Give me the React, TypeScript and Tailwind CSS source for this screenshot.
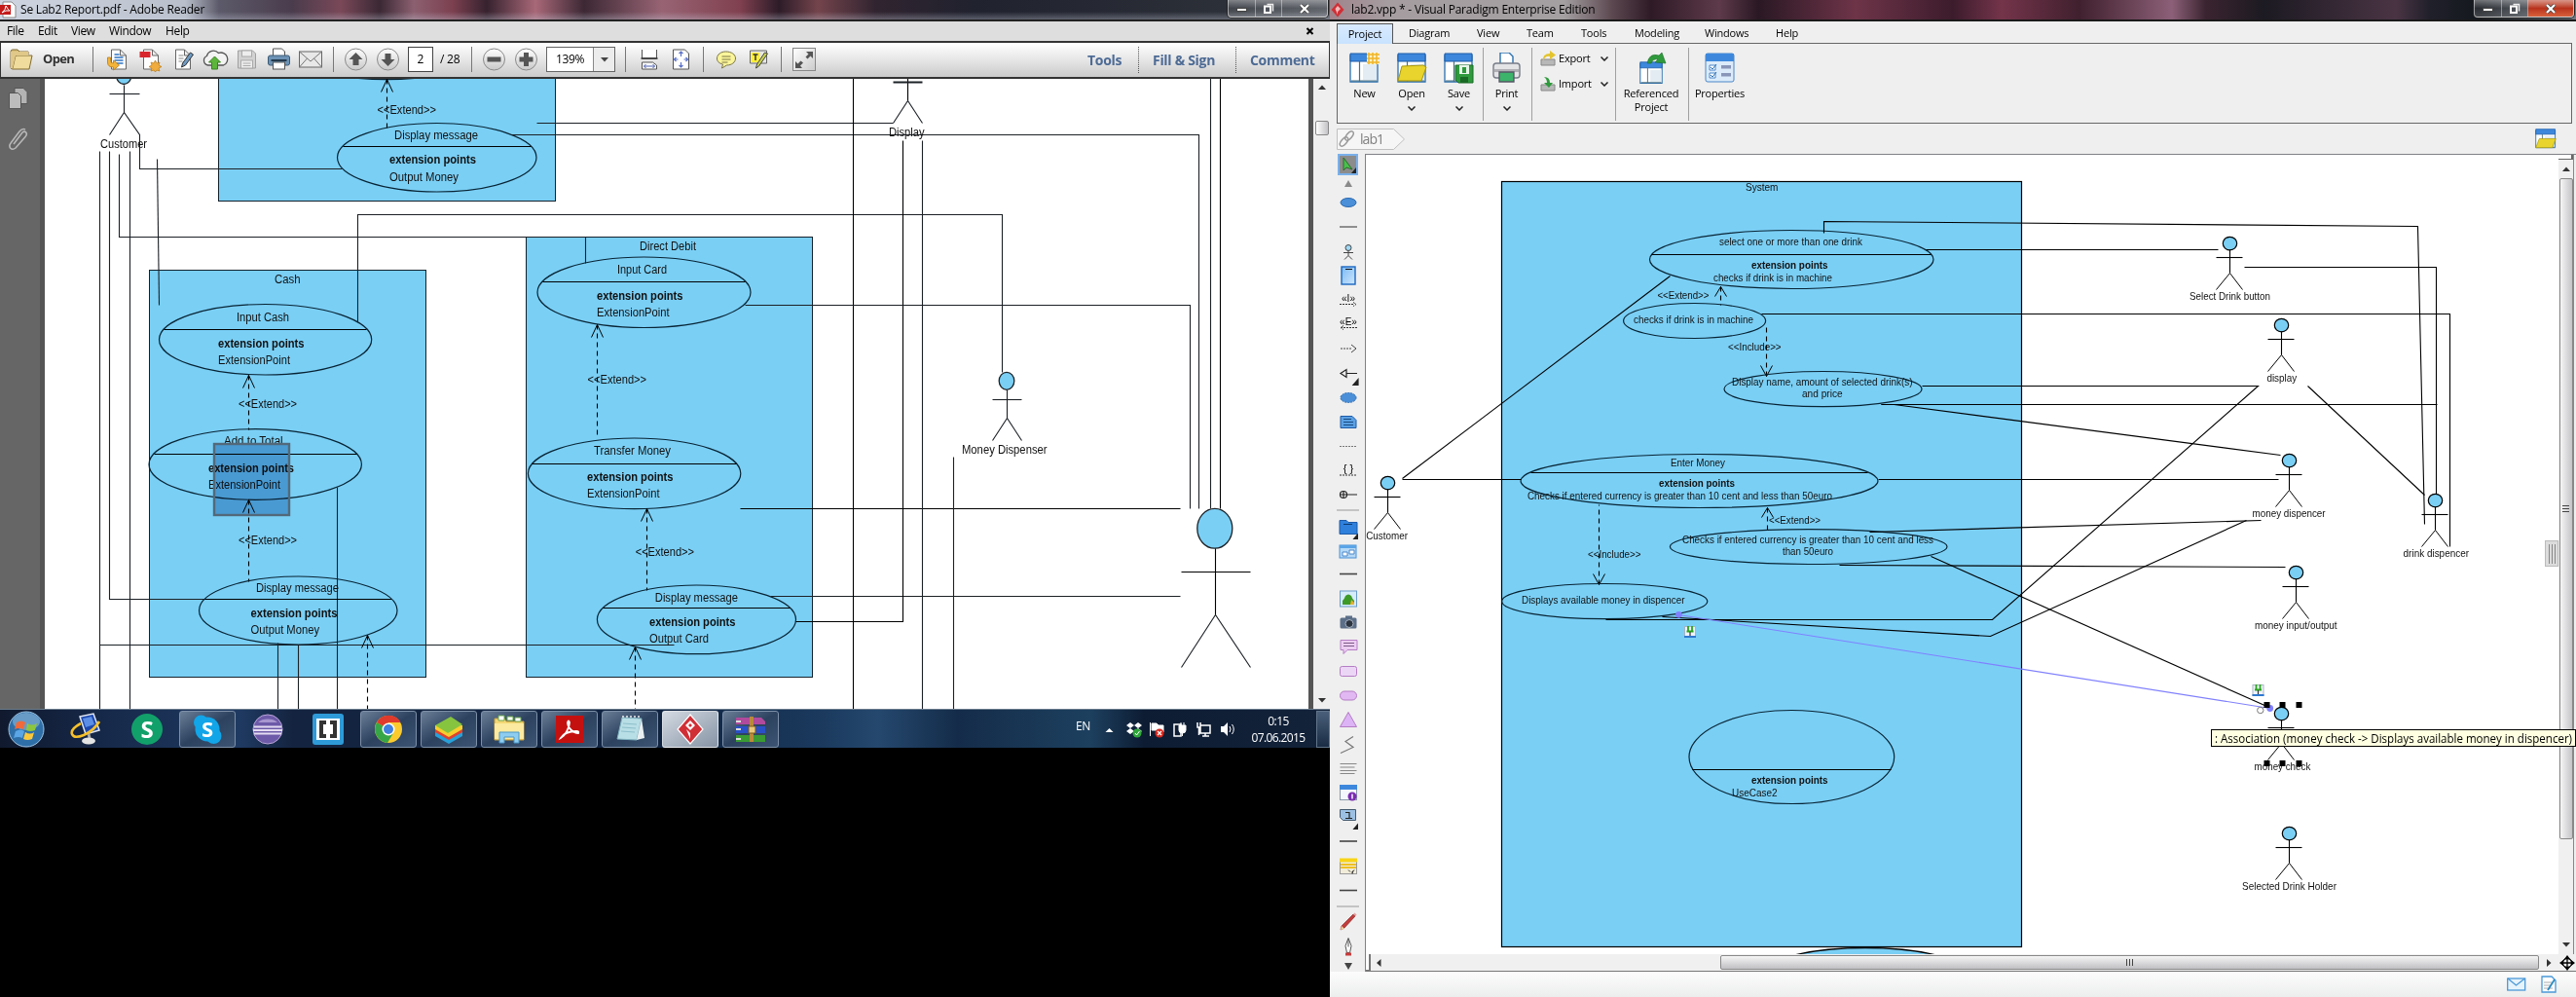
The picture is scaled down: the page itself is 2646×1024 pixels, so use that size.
import React from "react";

type Pts = number[];
const snap = (v: number) => Math.floor(v) + 0.5;
const FILL = "#7acff5";

/* ---------- diagram primitives ---------- */
function P({ p, c = "#000", w = 1.1, d }: { p: Pts; c?: string; w?: number; d?: string }) {
  const s: string[] = [];
  for (let i = 0; i < p.length; i += 2) s.push(`${snap(p[i])},${snap(p[i + 1])}`);
  return <polyline points={s.join(" ")} fill="none" stroke={c} strokeWidth={w} strokeDasharray={d} />;
}
function Tx({ x1, x2, y, b, s = 12, c = "#111", children }: { x1: number; x2: number; y: number; b?: boolean; s?: number; c?: string; children: string }) {
  return (
    <text x={x1} y={y} textLength={x2 - x1} lengthAdjust="spacingAndGlyphs" fontSize={s} fontWeight={b ? 700 : 400} fill={c} fontFamily="'Liberation Sans', Arial, sans-serif">
      {children}
    </text>
  );
}
function Ell({ x1, x2, y1, y2, div, fill = "none" }: { x1: number; x2: number; y1: number; y2: number; div?: number; fill?: string }) {
  const cx = (x1 + x2) / 2, cy = (y1 + y2) / 2, rx = (x2 - x1) / 2, ry = (y2 - y1) / 2;
  const k = div ? rx * Math.sqrt(1 - ((div - cy) / ry) ** 2) : 0;
  return (
    <g>
      <ellipse cx={cx} cy={cy} rx={rx} ry={ry} fill={fill} stroke="#082434" strokeWidth={1.2} />
      {div && <P p={[cx - k, div, cx + k, div]} />}
    </g>
  );
}
function Arrow({ x, from, to, w = 6, h = 13 }: { x: number; from: number; to: number; w?: number; h?: number }) {
  const d = from > to ? 1 : -1;
  return (
    <g>
      <P p={[x, to, x, from]} d="5 4" w={1.1} />
      <P p={[x - w, to + d * h, x, to, x + w, to + d * h]} w={1} />
    </g>
  );
}
function Actor({ x, t }: { x: number; t: number }) {
  return (
    <g>
      <ellipse cx={x + 0.5} cy={t + 6.8} rx={7.2} ry={6.8} fill={FILL} stroke="#000" strokeWidth={1.2} />
      <P p={[x, t + 13.5, x, t + 37]} />
      <P p={[x - 13.5, t + 21, x + 13.5, t + 21]} />
      <P p={[x - 13.5, t + 54, x, t + 37, x + 13.5, t + 54]} w={1} />
    </g>
  );
}

/* ---------- Adobe Reader document ---------- */
function PdfPage() {
  const K = "#1c2126";
  return (
    <svg width="1298" height="647" viewBox="46 81 1298 647" className="block bg-white">
      <rect x="224.5" y="60.5" width="346" height="146" fill={FILL} stroke="#14222c" />
      <rect x="153.5" y="277.5" width="284" height="418" fill={FILL} stroke="#14222c" />
      <rect x="540.5" y="243.5" width="294" height="452" fill={FILL} stroke="#14222c" />
      <ellipse cx="397" cy="46.5" rx="105" ry="35" fill="none" stroke="#082434" strokeWidth="1.5" />

      <ellipse cx="127.2" cy="77.5" rx="7.6" ry="9" fill={FILL} stroke={K} strokeWidth="1.3" />
      <P p={[127, 87, 127, 115]} c={K} /><P p={[112, 96, 143, 96]} c={K} />
      <P p={[112, 138, 127, 115, 143, 138, 143, 173, 351, 173]} c={K} />
      <Tx x1={103} x2={151} y={151.7}>Customer</Tx>

      <P p={[102, 155, 102, 728]} c={K} /><P p={[102, 662, 692, 662]} c={K} />
      <P p={[112, 155, 112, 615, 402, 615]} c={K} />
      <P p={[122, 158, 122, 243, 601, 243, 601, 270]} c={K} />
      <P p={[133, 155, 133, 728]} c={K} />
      <P p={[161, 163, 163, 313]} c={K} />

      <Arrow x={397} from={131} to={81} />
      <Tx x1={387.5} x2={448} y={116.5}>{"<<Extend>>"}</Tx>
      <Ell x1={346.5} x2={551} y1={126.5} y2={197} div={150} />
      <Tx x1={405} x2={491} y={142.5}>Display message</Tx>
      <Tx x1={400} x2={489} y={168} b>extension points</Tx>
      <Tx x1={400} x2={471} y={185.5}>Output Money</Tx>
      <P p={[551, 126, 917, 126]} c={K} />
      <P p={[525, 138, 1231, 138, 1231, 522]} c={K} />

      <Tx x1={282} x2={308.5} y={291}>Cash</Tx>
      <P p={[367, 330, 367, 220, 1029, 220, 1029, 382]} c={K} />
      <Ell x1={163.5} x2={381.7} y1={312.5} y2={385} div={338} />
      <Tx x1={243} x2={297} y={330}>Input Cash</Tx>
      <Tx x1={224} x2={312.5} y={356.5} b>extension points</Tx>
      <Tx x1={224} x2={298} y={374}>ExtensionPoint</Tx>
      <Arrow x={255} from={441} to={385} />
      <Tx x1={245} x2={305} y={419}>{"<<Extend>>"}</Tx>
      <Ell x1={153} x2={371.4} y1={440.7} y2={513.3} div={466} />
      <Tx x1={230} x2={290.6} y={457}>Add to Total</Tx>
      <Tx x1={214} x2={302} y={484.5} b>extension points</Tx>
      <Tx x1={214} x2={288} y={502}>ExtensionPoint</Tx>
      <P p={[346, 500, 346, 728]} c={K} />
      <Arrow x={255} from={597} to={513} />
      <rect x="220" y="456" width="77" height="73" fill="#99bedb" className="mix-blend-multiply" />
      <rect x="220" y="456" width="77" height="73" fill="none" stroke="#52697a" strokeWidth="2.4" />
      <Tx x1={245} x2={305} y={558.7}>{"<<Extend>>"}</Tx>
      <Ell x1={204.5} x2={408} y1={592} y2={662} div={615} />
      <Tx x1={263} x2={348} y={608}>Display message</Tx>
      <Tx x1={257.6} x2={346.4} y={634} b>extension points</Tx>
      <Tx x1={257.6} x2={328} y={651}>Output Money</Tx>
      <P p={[285, 660, 285, 728]} c={K} /><P p={[306, 662, 306, 728]} c={K} />
      <Arrow x={377} from={728} to={652} />

      <Tx x1={657} x2={715} y={256.5}>Direct Debit</Tx>
      <Ell x1={552} x2={771} y1={264} y2={336.5} div={289} />
      <Tx x1={634} x2={685} y={281}>Input Card</Tx>
      <Tx x1={613} x2={701.5} y={308} b>extension points</Tx>
      <Tx x1={613} x2={687.6} y={325}>ExtensionPoint</Tx>
      <Arrow x={613} from={450} to={333} />
      <Tx x1={603.6} x2={664} y={393.5}>{"<<Extend>>"}</Tx>
      <Ell x1={542.4} x2={760.8} y1={450} y2={522.7} div={476} />
      <Tx x1={610} x2={689} y={467}>Transfer Money</Tx>
      <Tx x1={603} x2={691.5} y={494} b>extension points</Tx>
      <Tx x1={603} x2={677.5} y={511}>ExtensionPoint</Tx>
      <Arrow x={664} from={606} to={522} />
      <Tx x1={652.7} x2={713} y={570.6}>{"<<Extend>>"}</Tx>
      <Ell x1={613.4} x2={817.5} y1={601} y2={671.7} div={624} />
      <Tx x1={672.8} x2={758} y={617.5}>Display message</Tx>
      <Tx x1={667} x2={755.5} y={643} b>extension points</Tx>
      <Tx x1={667} x2={728} y={660}>Output Card</Tx>
      <Arrow x={652} from={728} to={664} />

      <P p={[791, 612, 1212, 612]} c={K} />
      <P p={[817, 638, 927, 638, 927, 144]} />
      <P p={[760, 522, 1212, 522]} />
      <P p={[876, 80, 876, 728]} /><P p={[947, 144, 947, 728]} c={K} />
      <P p={[765, 313, 1222, 313, 1222, 522]} c={K} />
      <P p={[1243, 80, 1243, 522]} c={K} /><P p={[1253, 80, 1253, 522]} />
      <P p={[979, 469, 979, 728]} c={K} />

      <P p={[932, 80, 932, 103]} /><P p={[917, 84, 947, 84]} c={K} w={2} />
      <P p={[917, 126, 932, 103, 947, 126]} c={K} />
      <Tx x1={913} x2={949.6} y={140}>Display</Tx>

      <ellipse cx="1034" cy="391.3" rx="7.8" ry="9" fill={FILL} stroke={K} strokeWidth="1.3" />
      <P p={[1034, 400, 1034, 429]} c={K} /><P p={[1019, 410, 1049, 410]} c={K} />
      <P p={[1019, 452, 1034, 429, 1049, 452]} c={K} />
      <Tx x1={988} x2={1075.5} y={466}>Money Dispenser</Tx>

      <ellipse cx="1247.8" cy="542.8" rx="18" ry="20.4" fill={FILL} stroke={K} strokeWidth="1.3" />
      <P p={[1248, 563, 1248, 631]} /><P p={[1213, 587, 1284, 587]} />
      <P p={[1213, 685, 1248, 631, 1284, 685]} c={K} />
    </svg>
  );
}

/* ---------- Visual Paradigm canvas ---------- */
const actors: [number, number, string, number, number][] = [
  [2290, 243, "Select Drink button", 2249, 2332],
  [2343, 327, "display", 2328.4, 2359.3],
  [2351, 466, "money dispencer", 2313.5, 2388.6],
  [2501, 507, "drink dispencer", 2468.6, 2536],
  [2358, 581, "money input/output", 2316, 2400.5],
  [2343, 726, "money check", 2315.6, 2373.3],
  [2351, 849, "Selected Drink Holder", 2303, 2400],
  [1425, 489, "Customer", 1403.2, 1446],
];
function Pin({ x, y }: { x: number; y: number }) {
  return (
    <g transform={`translate(${x} ${y})`}>
      <rect x="0.5" y="0.5" width="11" height="11" fill="#eef3fa" stroke="#aab4c4" />
      <rect x="0" y="10" width="12" height="2" fill="#2f78d0" />
      <path d="M4 0v5M8 0v5M2.5 5.5h7" stroke="#2aa31e" strokeWidth="1.8" />
      <path d="M6 6v4" stroke="#333" strokeWidth="1.2" />
    </g>
  );
}
function Canvas() {
  return (
    <svg width="1225" height="821" viewBox="1403 159 1225 821" className="block bg-white">
      <rect x="1542.5" y="186.5" width="534" height="786" fill={FILL} stroke="#000" strokeWidth="1.2" />
      <ellipse cx="1916" cy="1003.5" rx="110" ry="30" fill={FILL} stroke="#000" strokeWidth="1.3" />
      <Tx x1={1793} x2={1826.5} y={196.3} s={10.5}>System</Tx>

      <Ell x1={1694.5} x2={1986} y1={236.5} y2={296.5} div={261} />
      <Tx x1={1766} x2={1913} y={252.3} s={10.5}>select one or more than one drink</Tx>
      <Tx x1={1799} x2={1877.5} y={276.3} s={10.5} b>extension points</Tx>
      <Tx x1={1760} x2={1882} y={289.3} s={10.5}>checks if drink is in machine</Tx>
      <P p={[1873, 239, 1873, 227, 2483, 232, 2490, 538]} />
      <P p={[1978, 256, 2278, 256]} />
      <P p={[1715, 283, 1440, 491]} />
      <Arrow x={1767} from={313} to={294} h={10} />
      <Tx x1={1702.4} x2={1755.5} y={306.5} s={10.5}>{"<<Extend>>"}</Tx>
      <Ell x1={1667.6} x2={1813.6} y1={311.5} y2={347.5} />
      <Tx x1={1678} x2={1801} y={332} s={10.5}>checks if drink is in machine</Tx>
      <P p={[1809, 322, 2516, 322, 2516, 561]} />
      <Arrow x={1814} from={335} to={386} h={11} />
      <Tx x1={1775} x2={1829.6} y={360} s={10.5}>{"<<Include>>"}</Tx>
      <Ell x1={1771} x2={1974} y1={381.5} y2={417.7} />
      <Tx x1={1779} x2={1964.5} y={396.3} s={10.5}>Display name, amount of selected drink(s)</Tx>
      <Tx x1={1851} x2={1892.6} y={408} s={10.5}>and price</Tx>
      <P p={[1974, 396, 2319, 396, 2046, 636, 1649, 636]} />
      <P p={[1932, 415, 2503, 415]} />
      <P p={[1932, 415, 1945, 415, 2342, 467]} />
      <P p={[2305, 274, 2502, 274, 2502, 507]} />
      <P p={[2370, 396, 2490, 508]} />

      <Ell x1={1562} x2={1929} y1={466.5} y2={521.5} div={485} />
      <Tx x1={1716} x2={1772} y={479.3} s={10.5}>Enter Money</Tx>
      <Tx x1={1704} x2={1782} y={500.3} s={10.5} b>extension points</Tx>
      <Tx x1={1569} x2={1882} y={513.3} s={10.5}>Checks if entered currency is greater than 10 cent and less than 50euro</Tx>
      <P p={[1440, 492, 1562, 492]} /><P p={[1929, 492, 2340, 492]} />
      <Arrow x={1642} from={518} to={600} h={11} />
      <Tx x1={1631} x2={1685.5} y={573} s={10.5}>{"<<Include>>"}</Tx>
      <Arrow x={1815} from={545} to={521} h={10} />
      <Tx x1={1817} x2={1870} y={538} s={10.5}>{"<<Extend>>"}</Tx>
      <Ell x1={1715.4} x2={2000} y1={543.7} y2={579.5} />
      <Tx x1={1728} x2={1986} y={558} s={10.5}>Checks if entered currency is greater than 10 cent and less</Tx>
      <Tx x1={1831} x2={1883} y={570} s={10.5}>than 50euro</Tx>
      <P p={[1920, 546, 2322, 534]} />
      <P p={[2307, 534, 2044, 653, 1707, 633]} />
      <P p={[1889, 580, 2347, 582]} />
      <P p={[1983, 571, 2328, 725]} />
      <Ell x1={1542.6} x2={1753.8} y1={599.5} y2={635.7} />
      <Tx x1={1563} x2={1730.5} y={620} s={10.5}>Displays available money in dispencer</Tx>
      <P p={[1724, 631, 2331, 727]} c="#8080ff" />
      <circle cx="1724.4" cy="631.3" r="3.4" fill="#8080ff" />
      <circle cx="2331.7" cy="727.5" r="3.4" fill="#8080ff" />
      <circle cx="2321.8" cy="729.5" r="3.2" fill="#fff" stroke="#777" />
      <Pin x={1730} y={643} /><Pin x={2313.5} y={703} />

      <Ell x1={1735} x2={1945.7} y1={729.5} y2={825.5} div={790} />
      <Tx x1={1799} x2={1877.5} y={805.3} s={10.5} b>extension points</Tx>
      <Tx x1={1779} x2={1825.6} y={818.3} s={10.5}>UseCase2</Tx>

      {actors.map(([x, t, n, a, b]) => (
        <g key={n}>
          <Actor x={x} t={t + 0.3} />
          <Tx x1={a} x2={b} y={t + 65} s={10.5}>{n}</Tx>
        </g>
      ))}
      {[2325.5, 2341.5, 2358.5].map((x) => (
        <g key={x}><rect x={x} y="721" width="6" height="6" /><rect x={x} y="781" width="6" height="6" /></g>
      ))}
      <rect x="2614.5" y="555.5" width="13" height="26" fill="#dcdcdc" stroke="#bbb" />
      <path d="M2618.5 559v20M2621.5 559v20M2624.5 559v20" stroke="#888" />
    </svg>
  );
}

/* ---------- icons ---------- */
function C({ w = 33, h = 34, children }: { w?: number; h?: number; children?: React.ReactNode }) {
  return (
    <svg width={w} height={h} viewBox={`${-w / 2} ${-h / 2} ${w} ${h}`} className="block shrink-0">
      {children}
    </svg>
  );
}
const Sep = ({ c }: { c: string }) => <div className={`h-[26px] w-px shrink-0 bg-[#777] ${c}`} />;
const page = <path d="M-7 -10h9l6 6v14h-15zM2 -10v6h6" fill="#fdfdfd" stroke="#666" />;

function Circle({ d }: { d: string }) {
  return (
    <C>
      <circle r="11" fill="url(#cg)" stroke="#8a8a8a" />
      <path d={d} fill="#555" />
    </C>
  );
}

function ReaderToolbar() {
  return (
    <div className="flex h-[39px] shrink-0 items-center border-2 border-x border-[#333] bg-linear-to-b from-white via-[#e6e6e6] to-[#cbcbcb] pb-px">
      <svg width="24" height="22" viewBox="0 0 24 22" className="ml-[9px] shrink-0">
        <path d="M1 3q0-2 2-2h5l2 2h9v3" fill="#d9c07a" stroke="#806a32" />
        <path d="M1 3v16q0 2 2 2h17l3-14H6L3 20" fill="#f0dc9c" stroke="#806a32" />
        <path d="M1 3h18v4H6L3 20H1z" fill="#e0c888" />
      </svg>
      <span className="ml-[10px] w-[32px] shrink-0 text-[13px] font-bold tracking-[-0.7px] text-[#333]">Open</span>
      <Sep c="ml-[19px]" />
      <div className="ml-[9px] flex shrink-0">
        <C>{page}<path d="M-4 -5h5M-4 -2h9M-4 1h9M-4 4h9" stroke="#2d74c4" strokeWidth="1.3" /><path d="M-11 -2v5q0 5 6 5v3l6-5-6-5v3q-3 0-3-3v-3z" fill="#f3b43a" stroke="#b97a12" strokeWidth=".8" /></C>
        <C>{page}<rect x="-11" y="-8" width="11" height="6" fill="#d8262c" /><path d="M5 1l1.5 3 3-1-1 3 3 1.500-3 1.500 1 3-3-1-1.500 2-1.500-2-3 1 1-3-3-1.500 3-1.500-1-3 3 1z" fill="#f0ac3e" stroke="#b97a12" strokeWidth=".7" /></C>
        <C>{page}<path d="M-4 -4h5M-4 -1h5M-4 2h4" stroke="#888" /><path d="M8 -7l3 2-8 11-4 2 1-4z" fill="#6f9bc4" stroke="#333" /></C>
        <C><path d="M-7 6a5 5 0 0 1-1-9.500a7 7 0 0 1 12-3a6 6 0 0 1 5 12.500z" fill="#f3f3f3" stroke="#555" strokeWidth="1.3" /><path d="M0 -3l6 6h-3v7h-6v-7h-3z" fill="#5db53c" stroke="#38821e" /></C>
        <C><path d="M-9 -9h15l3 3v15h-18z" fill="#d2d2d2" stroke="#a0a0a0" /><rect x="-5" y="-9" width="10" height="6" fill="#eee" stroke="#aaa" /><rect x="-6" y="1" width="12" height="8" fill="#eee" stroke="#aaa" /><path d="M-4 4h8M-4 6.500h8" stroke="#aaa" /></C>
        <C><path d="M-6 -3v-8h9l3 3v5" fill="#fff" stroke="#555" /><rect x="-11" y="-4" width="22" height="10" rx="2" fill="#6d93b5" stroke="#3c5a75" /><path d="M-8 1h16" stroke="#243a4d" strokeWidth="2" /><rect x="-6" y="3" width="12" height="7" fill="#fff" stroke="#555" /></C>
        <C><rect x="-12" y="-8" width="23" height="16" fill="#e8e8e8" stroke="#666" /><path d="M-12 -8l11.500 10L11 -8M-12 8l8-9M11 8l-8-9" fill="none" stroke="#777" /></C>
      </div>
      <Sep c="ml-[6px]" />
      <div className="ml-[6px] flex shrink-0">
        <Circle d="M0 -7l7 7h-4v6h-6v-6h-4z" />
        <Circle d="M0 7l7 -7h-4v-6h-6v6h-4z" />
      </div>
      <div className="ml-[4px] flex h-[26px] w-[26px] shrink-0 items-center justify-center border border-[#444] bg-white text-[12px]">2</div>
      <span className="ml-[7px] w-[23px] shrink-0 text-[12px] tracking-[-0.2px] whitespace-pre">/ 28</span>
      <Sep c="ml-[9px]" />
      <div className="ml-[6px] flex shrink-0">
        <Circle d="M-7 -2.500h14v5h-14z" />
        <Circle d="M-7 -2.500h4.500v-4.500h5v4.500h4.500v5h-4.500v4.500h-5v-4.500h-4.500z" />
      </div>
      <div className="ml-[4px] flex h-[26px] w-[71px] shrink-0 items-center border border-[#666] bg-white text-[12px] tracking-[-0.4px]">
        <span className="flex-1 text-center">139%</span>
        <div className="flex h-full w-[22px] items-center justify-center border-l border-[#888] bg-[#ececec]">
          <svg width="8" height="5"><path d="M0 0h8l-4 4.500z" fill="#444" /></svg>
        </div>
      </div>
      <Sep c="ml-[10px]" />
      <div className="ml-[7px] flex shrink-0">
        <C><path d="M-7 -10v9h15v-9M-7 10v-7h11l4 3v4z" fill="#fff" stroke="#555" /><path d="M-8 -1h17" stroke="#333" strokeWidth="1.600" /><path d="M-5 7h11M-3 5l-2 2 2 2M4 5l2 2-2 2" fill="none" stroke="#4a5fb0" /></C>
        <C><path d="M-8 -10h12l4 4v16h-16z" fill="#fff" stroke="#555" /><path d="M0 -8v5M0 8v-5M-7 0h4M7 0h-4M-2 -6l2-2 2 2M-2 6l2 2 2-2M-5 -2l-2 2 2 2M5 -2l2 2-2 2" fill="none" stroke="#5a70c8" strokeWidth="1.200" /></C>
      </div>
      <Sep c="ml-[6px]" />
      <div className="ml-[7px] flex shrink-0">
        <C><path d="M-1 -8c6 0 10 3 10 7s-4 7-9 7l-5 3 1-4c-4-1-6-3-6-6 0-4 4-7 9-7z" fill="#fbf59a" stroke="#7c7648" /><path d="M-5 -3h9M-5 0h9M-5 3h6" stroke="#7c7648" /></C>
        <C><path d="M-9 -9h17v13h-17z" fill="#e7e7e7" stroke="#666" /><rect x="-8" y="-7" width="9" height="10" fill="#ffef3a" /><path d="M-6 -5h5M-3.500 -5v6" stroke="#333" strokeWidth="1.500" /><path d="M9 -6l-9 13-3 2 1-4 8-12z" fill="#c8d050" stroke="#444" /></C>
      </div>
      <Sep c="ml-[6px]" />
      <div className="ml-[11px] flex h-6 w-6 shrink-0 items-center justify-center border border-[#888] bg-linear-to-br from-white to-[#ccc]">
        <svg width="20" height="20" viewBox="0 0 20 20"><path d="M12 2h7v7l-2.500-2.500-3 3-2-2 3-3zM1 19v-7l2.500 2.500 3-3 2.500 2-3 3L8 19z" fill="#555" /></svg>
      </div>
      <div className="mr-[12px] ml-auto flex shrink-0 items-center text-[14px] font-bold tracking-[-0.3px] text-[#4d6b95]">
        <span className="w-[38px] whitespace-nowrap">Tools</span>
        <div className="mx-[14px] h-[27px] border-l border-dotted border-[#555]" />
        <span className="w-[71px] whitespace-nowrap">Fill &amp; Sign</span>
        <div className="mx-[14px] h-[27px] border-l border-dotted border-[#555]" />
        <span className="w-[69px] whitespace-nowrap">Comment</span>
      </div>
    </div>
  );
}

function WinButtons({ red }: { red?: boolean }) {
  const cell = "flex h-[17px] items-center justify-center";
  return (
    <div className="flex self-start overflow-hidden rounded-b-[4px] border border-t-0 border-white/50 bg-linear-to-b from-white/40 via-white/10 to-white/20 shadow-[0_0_0_1px_#222]">
      <div className={`${cell} w-[28px] border-r border-white/40`}><div className="mt-[3px] h-[4px] w-[11px] border border-[#444] bg-white" /></div>
      <div className={`${cell} w-[27px] border-r border-white/40`}>
        <svg width="12" height="12"><path d="M4.500 1.500h6v7" fill="none" stroke="#eee" strokeWidth="1.500" /><rect x="2" y="3.500" width="6" height="6.500" fill="none" stroke="#fff" strokeWidth="2" /></svg>
      </div>
      <div className={`${cell} w-[46px] ${red ? "bg-linear-to-b from-[#d8968a] via-[#b8321c] to-[#d8603c]" : ""}`}>
        <svg width="12" height="10"><path d="M2 1l8 8M10 1l-8 8" stroke="#444" strokeWidth="3.600" /><path d="M2 1l8 8M10 1l-8 8" stroke="#fff" strokeWidth="2.200" /></svg>
      </div>
    </div>
  );
}

/* ---------- taskbar ---------- */
function Task({ on, hot, children }: { on?: boolean; hot?: boolean; children: React.ReactNode }) {
  return (
    <div className="flex w-[62px] shrink-0 justify-center">
      <div className={`flex h-[38px] w-[58px] items-center justify-center rounded-[3px] border ${hot ? "border-white/60 bg-linear-to-br from-[#d4dae2] to-[#8794a5]" : on ? "border-[#7d90a8] bg-linear-to-br from-[#6c7f98] via-[#2c425f] to-[#3d5573]" : "border-transparent"}`}>
        {children}
      </div>
    </div>
  );
}
function Taskbar() {
  return (
    <div className="flex h-[40px] shrink-0 items-center border-t border-[#6a7b8c] bg-[linear-gradient(90deg,#10192e_0%,#16294a_8%,#1f3a62_18%,#142440_22%,#0f2340_50%,#1b3a5e_62%,#25486e_66%,#142c49_72%,#1d405f_82%,#0d1c33_86%,#13233a_100%)]">
      <div className="flex w-[58px] shrink-0 justify-center pr-1">
        <svg width="38" height="38" viewBox="-19 -19 38 38">
          <circle r="18" fill="#2f6fa8" stroke="#9fc4e0" /><ellipse cy="-8" rx="14" ry="9" fill="#8fbbdc" opacity=".6" />
          <path d="M-10 -7q5-3 9 0l-2 7q-4-2-9 0z" fill="#f06a3a" /><path d="M1 -6q5 3 10 0l-2 7q-5 2-9 0z" fill="#8cc63e" />
          <path d="M-12 2q5-3 9 0l-2 7q-4-2-9 0z" fill="#5aa6e6" transform="translate(1)" /><path d="M-1 3q5 3 9 0l-2 7q-5 2-9 0z" fill="#fbc93c" />
        </svg>
      </div>
      <Task><svg width="34" height="34" viewBox="-17 -17 34 34"><path d="M-7 -13l14-3 6 17-14 4z" fill="#1c48b0" stroke="#dfe6f0" strokeWidth="1.500" /><path d="M-4 -11l9-2 3 8-9 3z" fill="#5b8ee4" /><path d="M2 5l1 4" stroke="#aaa" strokeWidth="3" /><ellipse cx="2" cy="12" rx="7" ry="3.500" fill="#e4e4e4" /><path d="M-6 -6q-11 6-9 11t12 1q11-5 16-14" fill="none" stroke="#f5c02c" strokeWidth="2.600" /></svg></Task>
      <Task><svg width="34" height="34" viewBox="-17 -17 34 34"><circle r="16" fill="#12a06a" /><text y="8.500" textAnchor="middle" fontSize="24" fontWeight="700" fill="#fff" fontFamily="'Open Sans', sans-serif">S</text></svg></Task>
      <Task on><svg width="32" height="32" viewBox="-16 -16 32 32"><circle r="12.500" fill="#12a5e8" /><circle cx="-6.500" cy="-7" r="7.500" fill="#12a5e8" /><circle cx="6.500" cy="7" r="8" fill="#12a5e8" /><text y="8" textAnchor="middle" fontSize="22" fontWeight="700" fill="#fff" fontFamily="'Open Sans', sans-serif">S</text></svg></Task>
      <Task><svg width="32" height="32" viewBox="-16 -16 32 32"><circle r="15" fill="#6d5aa8" stroke="#b9a6d8" /><path d="M-10 -7a12 8 0 0 1 20 0z" fill="#a897cf" /><path d="M-14 -2.500h28M-15 1h30M-14 4.500h28" stroke="#e3dcf2" strokeWidth="1.800" /></svg></Task>
      <Task><svg width="32" height="32" viewBox="-16 -16 32 32"><rect x="-16" y="-16" width="32" height="32" rx="3" fill="#2e9bd8" /><rect x="-12" y="-11" width="24" height="22" fill="#fff" /><path d="M-2 -7h-5v14h5M2 -7h5v14h-5" fill="none" stroke="#333" strokeWidth="4" /></svg></Task>
      <Task on><svg width="30" height="30" viewBox="-15 -15 30 30"><circle r="14" fill="#fbcb2e" /><path d="M0 0L-12 -7A14 14 0 0 1 12.500 -7H0z" fill="#e03a2c" /><path d="M0 0L-12 -7A14 14 0 0 0 -1 14l6-10z" fill="#37a648" /><circle r="6.500" fill="#fff" /><circle r="5" fill="#3f80e0" /></svg></Task>
      <Task on><svg width="32" height="32" viewBox="-16 -16 32 32"><path d="M-14 7l14 8 14-8v-4l-28 0z" fill="#28a0d8" /><path d="M-14 3l14 8 14-8v-4l-28 0z" fill="#e2402e" /><path d="M-14 0l14 8 14-8v-4l-28 0z" fill="#f7cf2e" /><path d="M-14 -4L2 -13l12 8L-1 4z" fill="#86c440" /></svg></Task>
      <Task on><svg width="34" height="32" viewBox="-17 -16 34 32"><path d="M-15 -11h10l2 3h18v19h-30z" fill="#f3d774" stroke="#c49e3c" /><path d="M-11 -14h6v5h-6zM-2 -13h6v4H-2zM6 -12h6v4H6z" fill="#fff" stroke="#6aa84f" /><path d="M-15 -6h30v16h-30z" fill="#fbeaa0" /><path d="M-10 14v-11h20v11h-5v-6h-10v6z" fill="#8fcdf0" stroke="#4a97c8" /></svg></Task>
      <Task on><svg width="30" height="30" viewBox="-15 -15 30 30"><path d="M-14 -14h28v28h-28z" fill="#c41110" /><path d="M-9 9c4-2 9-10 9-16q-1-3-2 0c0 6 6 11 11 11q1-2-2-2c-6 0-13 2-16 7z" fill="none" stroke="#fff" strokeWidth="1.800" /></svg></Task>
      <Task on><svg width="32" height="32" viewBox="-16 -16 32 32"><path d="M-8 -12l20 1-5 22-20-1z" fill="#b9dfe6" stroke="#7fb2bf" /><path d="M12 -11l3 20-8 2z" fill="#e9eff0" /><path d="M-7 -12v-2M-3 -12v-2M1 -12v-2M5 -12v-2M9 -12v-2" stroke="#eee" strokeWidth="1.500" /><path d="M-7 -6l14 1M-8 -2l14 1M-9 2l14 1" stroke="#8dbfcb" /></svg></Task>
      <Task on hot><svg width="30" height="34" viewBox="-15 -17 30 34"><path d="M0 -15l13 15-13 15-13-15z" fill="#d02f36" stroke="#fff" strokeWidth="1.200" /><path d="M0 -9l5 5-5 5-5-5zM-4 0l4 4v6z" fill="#fff" /><path d="M0 -6l2 2-2 2-2-2z" fill="#d02f36" /></svg></Task>
      <Task on><svg width="34" height="32" viewBox="-17 -16 34 32"><path d="M-15 -12h26l4 4v3h-30z" fill="#b04a9c" /><path d="M-15 -3h30v7h-30z" fill="#2a50c8" /><path d="M-15 6h30v7h-30z" fill="#3a9a34" /><path d="M-15 -8h5M-15 0h5M-15 10h5" stroke="#ddd" strokeWidth="2" /><path d="M1 -13v26" stroke="#b98a3c" strokeWidth="4" /><rect x="-2" y="-3" width="7" height="7" fill="#e8c87a" stroke="#7a5a1c" /></svg></Task>
      <div className="ml-auto flex shrink-0 items-center text-[12px] text-white">
        <span className="-mt-[6px] mr-[-4px] w-[28px] tracking-[-0.5px]">EN</span>
        <svg width="160" height="20" viewBox="1129 738 160 20">
          <path d="M1135.500 751h8l-4-4z" fill="#fff" />
          <path d="M1157 744l4-3 4 3-4 3zM1165 744l4-3 4 3-4 3zM1157 750l4-3 4 3-4 3zM1165 750l4-3 4 3-4 3z" fill="#fff" /><circle cx="1168" cy="752" r="4.500" fill="#2fa83a" /><path d="M1166 752l1.500 2 3-4" stroke="#fff" fill="none" />
          <path d="M1181.500 741v14M1183 742h5l2 2h5v7h-5l-2-2h-5z" fill="#fff" stroke="#fff" /><circle cx="1191" cy="752" r="4.500" fill="#d8281e" /><path d="M1189 750l4 4M1193 750l-4 4" stroke="#fff" strokeWidth="1.300" />
          <path d="M1206 743h7v12h-7z" fill="none" stroke="#fff" strokeWidth="1.500" /><path d="M1211 744h7v5q0 3-3.500 3t-3.500-3zM1213 741v3M1216 741v3M1214.500 752v3" fill="#fff" stroke="#fff" />
          <path d="M1233 744h10v8h-10zM1235 755h7M1238 752v3M1230 741v5h3v-5M1231.500 746v8" fill="none" stroke="#fff" strokeWidth="1.500" />
          <path d="M1254 745h3l4-4v14l-4-4h-3z" fill="#fff" /><path d="M1263 745q2 3 0 6M1265.500 743q3.500 5 0 10" fill="none" stroke="#fff" />
        </svg>
        <div className="mr-px ml-[-4px] flex w-[56px] flex-col items-center text-[12px] leading-[17px] tracking-[-0.6px]">
          <span>0:15</span><span>07.06.2015</span>
        </div>
        <div className="ml-[10px] h-[38px] w-[14px] border border-[#60748a] bg-linear-to-b from-[#4a607a] to-[#1a2c44]" />
      </div>
    </div>
  );
}

/* ---------- Visual Paradigm parts ---------- */
const winBase = (
  <g>
    <path d="M1 3h28v27h-28z" fill="#fff" stroke="#2a6fae" strokeWidth="1.300" />
    <path d="M1 1h28v8h-28z" fill="#3d88dc" stroke="#1c5aa8" />
    <path d="M10.500 9v21M28 29H2" stroke="#4a7080" strokeWidth="1.200" />
    <path d="M14 12h14v16h-14z" fill="#e3ecf2" />
  </g>
);
const I31 = ({ children }: { children: React.ReactNode }) => <svg width="31" height="32" viewBox="0 0 31 32" className="block">{children}</svg>;
const Chev = () => <svg width="8" height="5" className="block"><path d="M.5.500l3.500 3.500 3.500-3.500" fill="none" stroke="#222" strokeWidth="1.500" /></svg>;

function Rib({ w, label, chev, children }: { w: string; label: string; chev?: boolean; children: React.ReactNode }) {
  return (
    <div className={`flex shrink-0 flex-col items-center ${w}`}>
      {children}
      <span className="mt-[3px] text-center leading-[14px] whitespace-pre">{label}</span>
      {chev && <div className="mt-[6px]"><Chev /></div>}
    </div>
  );
}
const RSep = ({ c = "" }: { c?: string }) => <div className={`-mt-[5px] h-[75px] w-px shrink-0 bg-[#a0a0a0] ${c}`} />;

function Ribbon() {
  return (
    <div className="flex h-[82px] shrink-0 items-start border border-t-0 border-[#666] pt-[9px] pl-[4px] text-[11px] tracking-[-0.2px]">
      <Rib w="w-[47px]" label="New"><I31>{winBase}<path d="M18 0h12v12h-12z" fill="#fff4c8" /><path d="M18 2h13M18 6h13M18 10h13M20 0v12M24 0v12M28 0v12" stroke="#f0b428" strokeWidth="1.500" /></I31></Rib>
      <Rib w="w-[50px]" label="Open" chev><I31>{winBase}<path d="M5 14l22-1 3 2-5 14H1z" fill="#e8d42c" stroke="#a8960c" /></I31></Rib>
      <Rib w="w-[47px]" label="Save" chev><I31>{winBase}<path d="M12 13h18v18h-15l-3-3z" fill="#2f9a3c" stroke="#1a6a26" /><path d="M16 13h10v9h-10z" fill="#e8f4e8" /><path d="M19 15h4v6h-4z" fill="#2f9a3c" /><path d="M17 25h8v6h-8z" fill="#1a6a26" /></I31></Rib>
      <RSep c="ml-px" />
      <Rib w="w-[47px]" label="Print" chev><I31><path d="M9 12V0h9l4 4v8" fill="#fff" stroke="#2a6fae" strokeWidth="1.400" /><rect x="2" y="11" width="27" height="15" rx="3" fill="#e4e4e6" stroke="#777c88" strokeWidth="1.400" /><path d="M3 17h25v3H3z" fill="#b0b0b4" /><path d="M8 20h15v10H8z" fill="#3cb46a" stroke="#556" strokeWidth="1.300" /></I31></Rib>
      <RSep c="ml-[2px]" />
      <div className="-mt-[2px] ml-[8px] flex w-[78px] shrink-0 flex-col gap-[10px]">
        <div className="flex h-4 items-center">
          <svg width="17" height="16" viewBox="0 0 17 16"><path d="M1 9h14v6H1z" fill="#b8b8b8" stroke="#888" /><path d="M3 11q-1-8 7-8V0l6 4.500L10 9V6q-5-1-7 5z" fill="#e4c42c" /></svg>
          <span className="ml-[2px] w-[33px]">Export</span><div className="ml-[10px]"><Chev /></div>
        </div>
        <div className="flex h-4 items-center">
          <svg width="17" height="16" viewBox="0 0 17 16"><path d="M1 9h14v6H1z" fill="#b8b8b8" stroke="#888" /><path d="M4 1q6 0 6 6h3l-4 5-5-5h3q0-4-3-6z" fill="#2f9a3c" /></svg>
          <span className="ml-[2px] w-[33px]">Import</span><div className="ml-[10px]"><Chev /></div>
        </div>
      </div>
      <RSep c="ml-[-1px]" />
      <Rib w="w-[72px]" label={"Referenced\nProject"}><I31><g transform="translate(3 9) scale(.8 .75)">{winBase}</g><path d="M11 11q2-11 12-8l3-3 4 11-11-1 3-3q-5-1-7 4z" fill="#2f9a3c" stroke="#1a6a26" strokeWidth=".6" /></I31></Rib>
      <RSep c="ml-[2px]" />
      <Rib w="w-[63px]" label="Properties"><I31><rect x="1" y="1" width="29" height="29" rx="2" fill="#dcebfa" stroke="#4a86c8" /><path d="M1 1h29v8H1z" fill="#3d88dc" /><path d="M5 13h6v5H5zM5 21h6v5H5z" fill="#fff" stroke="#4a86c8" /><path d="M6 15l2 2 4-5M6 23l2 2 4-5" fill="none" stroke="#2a6fae" /><path d="M17 13h10v3.500H17zM17 21h10v3.500H17z" fill="#8a96b8" /></I31></Rib>
    </div>
  );
}

const tri = <path d="M10 13v-7l-6 7z" fill="#222" />;
const palette: [number, React.ReactNode][] = [
  [22, <g><rect x="-11" y="-11" width="21" height="22" fill="#7ab0ea" /><rect x="-9" y="-9" width="17" height="18" fill="#8c8c8c" /><path d="M-5 -7v13l3-3 6 2z" fill="#49c04c" stroke="#2c6a2c" /><path d="M8 9v-6l-5 6z" fill="#222" /></g>],
  [16, <path d="M-4 4h8l-4-7z" fill="#8a8a8a" />],
  [24, <ellipse rx="8" ry="4.500" fill="#4a8fd8" stroke="#2c6ab0" />],
  [26, <path d="M-9 0h18" stroke="#777" strokeWidth="1.600" />],
  [25, <g fill="none" stroke="#444"><circle cy="-4" r="3" fill="#9fd8f4" /><path d="M0 -1v5M-5 1h10M-4 8l4-4 4 4" /></g>],
  [24, <g><rect x="-7" y="-9" width="14" height="18" fill="url(#bl)" stroke="#1b66c0" strokeWidth="1.400" /><path d="M-3 -6.500h7" stroke="#111" /></g>],
  [25, <g><text y="2" textAnchor="middle" fontSize="10" fontFamily="'Liberation Sans', sans-serif">«I»</text><path d="M-9 5h15M5 3l3 2-3 2" fill="none" stroke="#333" strokeDasharray="2 1" /></g>],
  [25, <g><text y="1" textAnchor="middle" fontSize="10" fontFamily="'Liberation Sans', sans-serif">«E»</text><path d="M9 4H-7M-5 2l-3 2 3 2" fill="none" stroke="#333" strokeDasharray="2 1" /></g>],
  [26, <g fill="none" stroke="#444"><path d="M-8 0h12" strokeDasharray="2 1" /><path d="M3 -4l5 4-5 4" /></g>],
  [25, <g fill="none" stroke="#222" strokeWidth="1.200"><path d="M-8 0l6-4v8zM-2 0h11" />{tri}</g>],
  [25, <ellipse rx="8" ry="5" fill="#4a8fd8" stroke="#2c6ab0" strokeDasharray="2 1" />],
  [25, <g><path d="M-8 -6h12l4 4v8h-16z" fill="#5aa0e4" stroke="#1c5aa8" /><path d="M-5 -3h8M-5 0h10M-5 3h10" stroke="#184a80" /></g>],
  [25, <path d="M-9 0h18" stroke="#777" strokeWidth="1.200" strokeDasharray="2 1" />],
  [24, <g><text y="2" textAnchor="middle" fontSize="11" fontFamily="'Liberation Sans', sans-serif">{"{ }"}</text><path d="M-9 5h18" stroke="#333" strokeDasharray="2 1" /></g>],
  [26, <g fill="none" stroke="#222" strokeWidth="1.200"><circle cx="-5" r="3.500" /><path d="M-9 0H9M-5 -3.500v7" /></g>],
  [8, <path d="M-12 -1h23" stroke="#c4c4c4" strokeWidth="2" />],
  [25, <g><path d="M-9 -7h7l2 2h9v12H-9z" fill="#2f80dc" stroke="#1c5aa8" /><path d="M-5 -3h9" stroke="#0d3a70" />{tri}</g>],
  [24, <g><rect x="-9" y="-6" width="17" height="13" fill="#b4d8f6" stroke="#4a90d8" /><path d="M-9 -6h17v3H-9z" fill="#5aa4e6" /><path d="M-6 1h5v4h-5zM1 -1h5v4h-5z" fill="#fff" stroke="#4a86c8" /></g>],
  [25, <path d="M-9 -1h18" stroke="#444" strokeWidth="1.600" />],
  [24, <g><rect x="-8.500" y="-8" width="17" height="16" fill="#d6ecfa" stroke="#6a9cc8" /><path d="M-6 6v-4q2-2 3-5 3-3 6 0 1 3 3 5v4z" fill="#3d9a28" /><path d="M3 1l3 3v2h-4z" fill="#e8b030" /></g>],
  [25, <g><rect x="-8.500" y="-5" width="17" height="11" rx="1.500" fill="#5c6f88" /><rect x="-3" y="-7" width="7" height="3" fill="#5c6f88" /><circle r="4" cx="1" cy="1" fill="#2c3440" stroke="#a8b4c4" /></g>],
  [25, <g><path d="M-8 -7h17v10h-10l-4 4v-4h-3z" fill="#eccdf2" stroke="#b47cc4" /><path d="M-5 -4h11M-5 -1h11" stroke="#7a5a84" /></g>],
  [25, <rect x="-8.500" y="-5" width="17" height="10" rx="2" fill="#ecd6f6" stroke="#b47cc4" />],
  [25, <rect x="-8.500" y="-4.500" width="17" height="9" rx="4.500" fill="#e2b8f2" stroke="#b47cc4" />],
  [25, <path d="M0 -8l8.500 15h-17z" fill="#dcb4f6" stroke="#b47cc4" />],
  [25, <path d="M5 -8l-8 5 8 6-13 6" fill="none" stroke="#777" strokeWidth="1.200" />],
  [25, <path d="M-8.500 -5h17M-8.500 -1.500h15M-8.500 2h17M-8.500 5h15" stroke="#888" />],
  [25, <g><rect x="-8.500" y="-8" width="17" height="15" fill="#f4f8fc" stroke="#8a98a8" /><path d="M-9 -8.500h18v5h-18z" fill="#3d88dc" /><circle cx="4" cy="3.500" r="4.500" fill="#7a2cb0" /><path d="M4 1v5" stroke="#fff" strokeWidth="1.400" /></g>],
  [25, <g><path d="M-8.500 -8h16v11h-13l-3-3z" fill="#9cc0e4" stroke="#445a70" /><path d="M-3 -5h4v6h3M-3 1h7" fill="none" stroke="#222" strokeWidth="1.200" />{tri}</g>],
  [24, <path d="M-9 0h18" stroke="#444" strokeWidth="1.600" />],
  [27, <g><rect x="-8.500" y="-7" width="17" height="15" fill="#f0ecd8" stroke="#999" /><path d="M-9 -8h18v4h-18z" fill="#f8d418" /><path d="M-8 -1.500h16M-8 1.500h16" stroke="#f0c020" strokeWidth="2" /><path d="M0 4l2 2M6 4l-2 2v2" stroke="#333" /></g>],
  [25, <path d="M-9 -1h18" stroke="#444" strokeWidth="1.600" />],
  [6, <path d="M-12 0h23" stroke="#c4c4c4" strokeWidth="2" />],
  [26, <g><path d="M-8 8l1-4 12-12 2 2-11 12z" fill="#c43c3c" stroke="#7a2020" strokeWidth=".6" /><path d="M-8 8l1-4 3 3z" fill="#f0d09c" /><path d="M5 -8l2.500 2 1-1.500-2-2z" fill="#e8a0a0" /></g>],
  [25, <g><path d="M0 -9l3 8-1.500 7h-3l-1.500-7z" fill="#fff" stroke="#555" /><path d="M0 -8v8" stroke="#555" /><rect x="-3" y="6" width="6" height="3" fill="#c83c3c" /></g>],
  [16, <path d="M-4 -4h8l-4 7z" fill="#444" />],
];

export default function App() {
  return (
    <div className="flex h-[1024px] w-[2646px] overflow-hidden bg-black font-['Open_Sans',sans-serif] text-black">
      <svg width="0" height="0" className="absolute">
        <linearGradient id="cg" x2="0" y2="1"><stop stopColor="#fff" /><stop offset="1" stopColor="#c8c8c8" /></linearGradient>
        <linearGradient id="bl" x2="1" y2="1"><stop stopColor="#7ab8f4" /><stop offset="1" stopColor="#d0e8fc" /></linearGradient>
      </svg>

      <div className="flex h-[768px] w-[1366px] shrink-0 flex-col">
        <div className="flex h-[22px] shrink-0 items-center border-b-2 border-[#222] bg-[linear-gradient(180deg,transparent_60%,rgba(200,205,220,0.35)_100%),linear-gradient(90deg,#cfd6e2_0px,#b9c0cc_190px,#5c5a6a_225px,#4a3c4c_300px,#7a4858_350px,#3a2834_390px,#8c6070_425px,#7c4050_465px,#36222e_500px,#a86878_550px,#3c2834_600px,#986474_680px,#80404f_760px,#2c1c28_800px,#74444c_840px,#302430_900px,#20222e_1000px,#2c3038_1260px,#50545c_1366px)]">
          <svg width="17" height="18" viewBox="0 0 17 18" className="shrink-0"><path d="M3 1h9l4 4v12H3z" fill="#fff" stroke="#888" /><path d="M0 4h11v10H0z" fill="#c41a1a" /><path d="M2 12q4-3 4-7q3 5 4 5q-4-1-8 2z" fill="none" stroke="#fff" /></svg>
          <span className="ml-1 flex-1 text-[12px] tracking-[-0.2px]">Se Lab2 Report.pdf - Adobe Reader</span>
          <WinButtons />
          <div className="w-[2px]" />
        </div>
        <div className="flex h-[20px] shrink-0 items-center bg-[#dedede] pl-[7px] text-[12px] tracking-[-0.35px]">
          <span className="w-[32px]">File</span><span className="w-[34px]">Edit</span><span className="w-[39px]">View</span><span className="w-[58px]">Window</span><span>Help</span>
          <svg width="9" height="8" className="mr-[16px] ml-auto"><path d="M1.500 1l6 6M7.500 1l-6 6" stroke="#000" strokeWidth="2" /></svg>
        </div>
        <ReaderToolbar />
        <div className="flex h-[647px] shrink-0">
          <div className="flex w-[46px] shrink-0 flex-col items-center gap-[18px] border-r-[5px] border-[#555] bg-[#666] pt-[8px] pr-[3px]">
            <svg width="22" height="24"><path d="M7 1.500h9l4 4v12H7z" fill="#b4b4b4" stroke="#555" /><path d="M1.500 6.500h9l3 3v13h-12z" fill="#bcbcbc" stroke="#555" /></svg>
            <svg width="22" height="24" viewBox="0 0 22 24"><path d="M6 17l9-12q2.500-2 4 .5 1 2-1 4L8 21q-3 2.500-5.500 0-1.500-2.500.5-5L12 4q3-3.500 6-2" fill="none" stroke="#b8b8b8" strokeWidth="1.600" /></svg>
          </div>
          <PdfPage />
          <div className="w-[5px] shrink-0 bg-[#555]" />
          <div className="flex flex-1 flex-col items-center bg-[#efefef] py-[6px]">
            <svg width="8" height="5"><path d="M0 5h8l-4-4.500z" fill="#333" /></svg>
            <div className="mt-[32px] h-[15px] w-[14px] rounded-[2px] border border-[#888] bg-linear-to-r from-white to-[#c4c4c8]" />
            <svg width="8" height="5" className="mt-auto"><path d="M0 0h8l-4 4.500z" fill="#333" /></svg>
          </div>
        </div>
        <Taskbar />
      </div>

      <div className="flex h-[1024px] flex-1 flex-col bg-[#efefef]">
        <div className="flex h-[22px] shrink-0 items-center border-b-2 border-[#1a1a1a] bg-[linear-gradient(90deg,#a0848c_0px,#a59da0_60px,#a4a0a2_240px,#5c4850_290px,#2e1a26_330px,#5e3a4a_400px,#2a1824_440px,#6e3448_540px,#3c1c2c_640px,#74344a_690px,#40202e_770px,#8c6078_865px,#3a2430_900px,#1c1a22_960px,#4a3444_1095px,#20202a_1130px,#14181e_1180px,#707880_1280px)]">
          <svg width="14" height="16" viewBox="-7 -8 14 16" className="ml-[1px]"><path d="M0 -7.500l6.500 7.500-6.500 7.500-6.500-7.500z" fill="#d02f36" /><path d="M0 -4l3 3-3 3v3l-2.500-6z" fill="#f4b8b8" /></svg>
          <span className="ml-[7px] flex-1 text-[12px] tracking-[-0.2px]">lab2.vpp * - Visual Paradigm Enterprise Edition</span>
          <WinButtons red />
          <div className="w-[2px]" />
        </div>

        <div className="mr-[4px] ml-[7px] flex shrink-0 flex-col">
          <div className="flex h-[23px] items-end text-[11px] tracking-[-0.2px]">
            <div className="flex h-[21px] w-[58px] items-center justify-center border border-b-0 border-[#555] bg-linear-to-b from-[#d8eaff] to-[#c8e2ff]">Project</div>
            <div className="flex h-[21px] flex-1 items-center border-b border-[#666] pl-[16px]">
              <span className="w-[70px]">Diagram</span><span className="w-[51px]">View</span><span className="w-[56px]">Team</span><span className="w-[55px]">Tools</span><span className="w-[72px]">Modeling</span><span className="w-[73px]">Windows</span><span>Help</span>
            </div>
          </div>
          <Ribbon />
        </div>

        <div className="flex h-[31px] shrink-0 items-center pr-[20px] pl-[7px]">
          <svg width="71" height="22" viewBox="0 0 71 22"><path d="M.5.500h58l11 10.500-11 10.500H.5z" fill="#f6f6f6" stroke="#c0c0c0" /><g fill="none" stroke="#9a9a9a" strokeWidth="1.500"><ellipse cx="7.500" cy="13.500" rx="5.500" ry="2.800" transform="rotate(-50 7.500 13.500)" /><ellipse cx="13" cy="7.500" rx="5.500" ry="2.800" transform="rotate(-50 13 7.500)" /></g><text x="24" y="16" fontSize="14" textLength="25" fill="#808080" fontFamily="'Open Sans', sans-serif">lab1</text></svg>
          <svg width="22" height="21" viewBox="0 0 31 32" className="ml-auto" preserveAspectRatio="none">{winBase}<path d="M6 16h24l-5 14H1z" fill="#e8d42c" stroke="#a8960c" /></svg>
        </div>

        <div className="flex h-[840px] shrink-0">
          <div className="flex w-[36px] shrink-0 flex-col">
            {palette.map(([h, ic], i) => <C key={i} w={38} h={h}>{ic}</C>)}
          </div>
          <div className="flex flex-1 flex-col border-t border-l border-[#808088]">
            <div className="flex h-[821px]">
              <Canvas />
              <div className="flex w-[16px] flex-col items-center border-r border-[#888] bg-[#f0f0f0]">
                <div className="h-[5px] w-full border-r-2 border-b border-[#666] bg-white" />
                <svg width="8" height="5" className="mt-[7px] shrink-0"><path d="M0 5h8l-4-4.500z" fill="#333" /></svg>
                <div className="mt-[7px] flex h-[679px] w-[14px] shrink-0 flex-col items-center justify-center gap-[2px] rounded-[2px] border border-[#888] bg-linear-to-r from-[#f6f6f6] to-[#c4c4c8]">
                  <div className="h-px w-[7px] bg-[#444]" /><div className="h-px w-[7px] bg-[#444]" /><div className="h-px w-[7px] bg-[#444]" />
                </div>
                <svg width="8" height="5" className="mt-auto mb-[7px] shrink-0"><path d="M0 0h8l-4 4.500z" fill="#333" /></svg>
              </div>
              <div className="flex-1" />
            </div>
            <div className="flex h-[18px] items-center border-b border-[#777] bg-[#f0f0f0]">
              <div className="h-full w-[5px] border-r-2 border-b border-[#777] bg-white" />
              <svg width="5" height="8" className="ml-[6px]"><path d="M4.500 0v8l-4.500-4z" fill="#333" /></svg>
              <div className="ml-[348px] flex h-[15px] w-[841px] items-center justify-center gap-[2px] rounded-[2px] border border-[#888] bg-linear-to-b from-[#f6f6f6] to-[#c0c0c4]">
                <div className="h-[7px] w-px bg-[#444]" /><div className="h-[7px] w-px bg-[#444]" /><div className="h-[7px] w-px bg-[#444]" />
              </div>
              <svg width="5" height="8" className="ml-[8px]"><path d="M0 0v8l4.500-4z" fill="#333" /></svg>
              <svg width="16" height="16" viewBox="-8 -8 16 16" className="mr-px ml-auto"><path d="M0 -8l3 4h-6zM0 8l3-4h-6zM-8 0l4-3v6zM8 0l-4-3v6z" /><circle r="4.500" fill="none" stroke="#000" strokeWidth="1.300" /><path d="M-5 0h10M0 -5v10" stroke="#000" strokeWidth="1.300" /></svg>
            </div>
          </div>
        </div>

        <div className="flex flex-1 items-center justify-end gap-[15px] bg-linear-to-b from-[#fcfcfc] to-[#eceeed] pr-[19px]">
          <svg width="20" height="14"><rect x=".7" y="1" width="18" height="12" fill="#e6f3fc" stroke="#4a98d8" strokeWidth="1.300" /><path d="M1 1l8.500 7 9-7" fill="none" stroke="#4a98d8" strokeWidth="1.300" /></svg>
          <svg width="17" height="18"><path d="M1 1h10l4 4v12H1z" fill="#fff" stroke="#4a98d8" strokeWidth="1.300" /><path d="M3 7h8M3 10h7M3 13h9" stroke="#aaa" /><path d="M14 4l-7 11" stroke="#2a8ac0" strokeWidth="1.800" /></svg>
        </div>
      </div>

      <div className="absolute top-[749px] left-[2271px] flex h-[18px] w-[375px] items-center border border-black bg-[#ffffe1] pl-[3px] whitespace-nowrap">
        <svg width="369" height="16"><text x="0" y="12.500" fontSize="12.500" textLength="367" lengthAdjust="spacingAndGlyphs" fontFamily="'Open Sans', sans-serif">: Association (money check -&gt; Displays available money in dispencer)</text></svg>
      </div>
    </div>
  );
}
